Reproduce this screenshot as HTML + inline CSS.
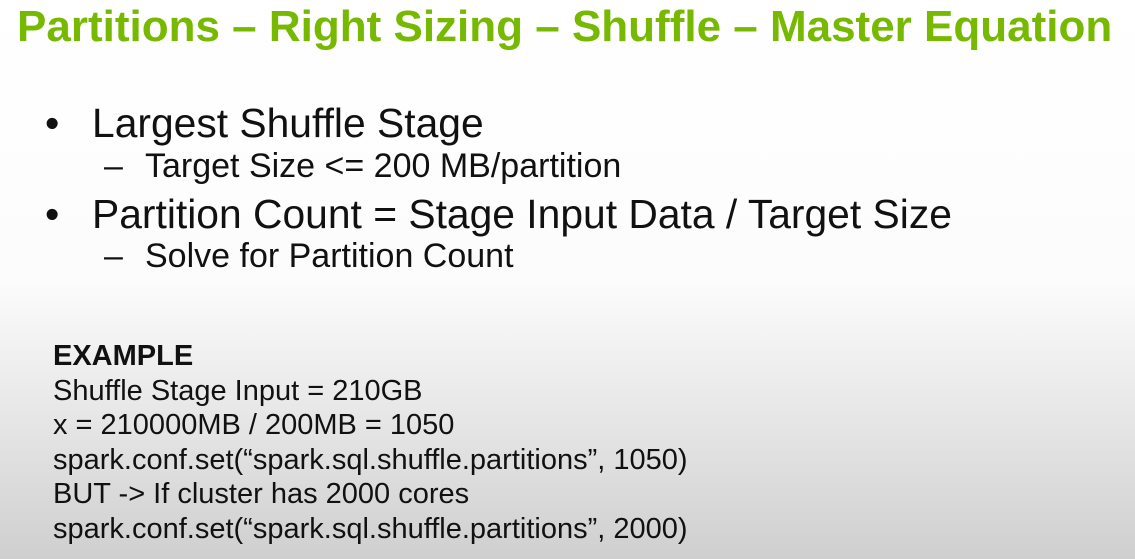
<!DOCTYPE html>
<html><head><style>
body{margin:0;width:1135px;height:559px;overflow:hidden;font-family:"Liberation Sans",Arial,sans-serif;background:linear-gradient(to bottom,#fff 0px,#fcfcfc 280px,#e6e6e6 420px,#cfcfcf 559px);position:relative;color:#111}
div{position:absolute;white-space:nowrap}
.t{left:17px;top:2px;font-size:44px;font-weight:bold;color:#76b900}
.b{font-size:40.8px}
.s{font-size:34px}
.e{left:53px;font-size:29px;line-height:34.6px;top:339px}
</style></head><body>
<div class="t">Partitions – Right Sizing – Shuffle – Master Equation</div>
<div class="b" style="left:45px;top:100px">•</div>
<div class="b" style="left:92px;top:100px">Largest Shuffle Stage</div>
<div class="s" style="left:104px;top:147px">–</div>
<div class="s" style="left:145px;top:147px">Target Size &lt;= 200 MB/partition</div>
<div class="b" style="left:45px;top:191px">•</div>
<div class="b" style="left:92px;top:191px">Partition Count = Stage Input Data / Target Size</div>
<div class="s" style="left:104px;top:237px">–</div>
<div class="s" style="left:145px;top:237px">Solve for Partition Count</div>
<div class="e"><b>EXAMPLE</b><br>Shuffle Stage Input = 210GB<br>x = 210000MB / 200MB = 1050<br>spark.conf.set(“spark.sql.shuffle.partitions”, 1050)<br>BUT -&gt; If cluster has 2000 cores<br>spark.conf.set(“spark.sql.shuffle.partitions”, 2000)</div>
</body></html>
